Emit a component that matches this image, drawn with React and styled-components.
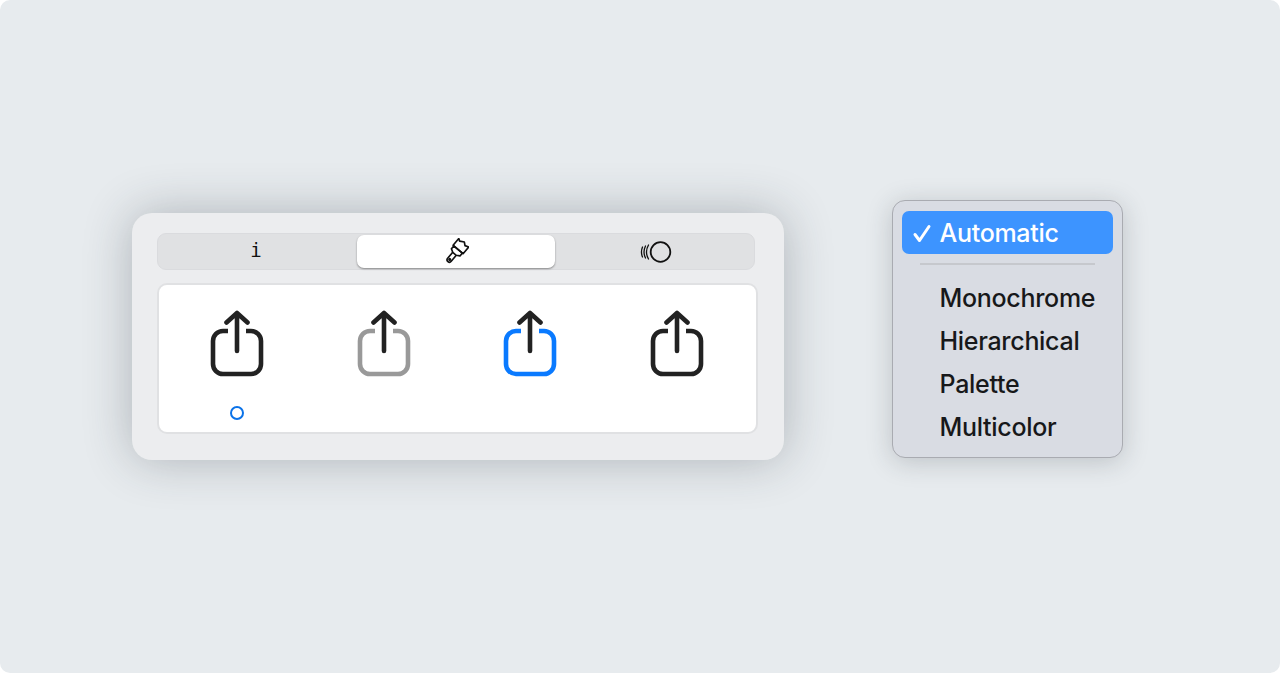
import React from "react"
import styled, { createGlobalStyle } from "styled-components"

const Global = createGlobalStyle`
    html, body {
        margin: 0;
        padding: 0;
        background: #fff;
    }
    * {
        box-sizing: border-box;
    }
`

const Page = styled.div`
    width: 1280px;
    height: 673px;
    display: flex;
    align-items: flex-start;
    padding: 200px 0 0 132px;
    gap: 108px;
    background: #e7ebee;
    border-radius: 10px;
    overflow: hidden;
    font-family: Inter, "Liberation Sans", sans-serif;
`

const Panel = styled.div`
    width: 652px;
    height: 247px;
    margin-top: 13px;
    padding: 20px 27px 0 25px;
    background: #ecedef;
    border-radius: 20px;
    box-shadow: 0 0 48px rgba(40, 50, 60, 0.3);
`

const Segments = styled.div`
    width: 598px;
    height: 37px;
    padding: 1px;
    display: grid;
    grid-template-columns: repeat(3, 1fr);
    background: #e0e1e3;
    border: 1px solid #dadbde;
    border-radius: 9px;
`

const Segment = styled.div`
    display: flex;
    align-items: center;
    justify-content: center;
    border-radius: 7px;
    background: ${p => (p.$active ? "#fff" : "transparent")};
    box-shadow: ${p => (p.$active ? "0 1px 2px rgba(0, 0, 0, 0.4)" : "none")};
    color: #111;
`

const InfoGlyph = styled.span`
    font-family: "DejaVu Sans Mono", "Liberation Mono", monospace;
    font-size: 19px;
    line-height: 1;
    margin: -2px 4px 0 0;
`

const Card = styled.div`
    width: 601px;
    height: 151px;
    margin-top: 13px;
    padding: 0 6px 0 5px;
    display: grid;
    grid-template-columns: repeat(4, 1fr);
    background: #fff;
    border: 2px solid #e0e1e3;
    border-radius: 10px;
`

const Cell = styled.div`
    display: flex;
    flex-direction: column;
    align-items: center;
    padding-top: 25px;
`

const Dot = styled.span`
    width: 14px;
    height: 14px;
    margin-top: 28px;
    border: 2px solid #0a72e8;
    border-radius: 50%;
`

const Menu = styled.div`
    width: 231px;
    height: 258px;
    padding: 10px 9.5px 10px 8.5px;
    background: #d9dce3;
    border: 1.5px solid #a9abb1;
    border-radius: 13px;
    box-shadow: 0 4px 26px rgba(40, 50, 60, 0.22);
`

const MenuItem = styled.div`
    height: 43px;
    padding-left: 38px;
    position: relative;
    display: flex;
    align-items: center;
    font-size: 25px;
    font-weight: 450;
    letter-spacing: -0.3px;
    color: ${p => (p.$selected ? "#fff" : "#17181a")};
    background: ${p => (p.$selected ? "#3d94ff" : "transparent")};
    border-radius: 7px;
`

const Check = styled.svg`
    position: absolute;
    left: 10px;
    top: 13px;
`

const Separator = styled.div`
    height: 2px;
    margin: 9px 18px 11px 18px;
    background: #c6c8cd;
`

function ShareIcon({ color }) {
    return (
        <svg width="54" height="68" viewBox="0 0 54 68" fill="none" strokeWidth="4.6" strokeLinecap="round" strokeLinejoin="round">
            <path
                d="M18 21H13a10 10 0 0 0-10 10V54a10 10 0 0 0 10 10H41a10 10 0 0 0 10-10V31a10 10 0 0 0-10-10H36"
                stroke={color}
                strokeLinecap="butt"
            />
            <path d="M27 41V4M16.5 12.5L27 3L37.5 12.5" stroke="#222" />
        </svg>
    )
}

function BrushIcon() {
    return (
        <svg width="26" height="28" viewBox="0 0 28 30" fill="none" stroke="#111" strokeWidth="1.8" strokeLinejoin="round">
            <g transform="rotate(40 14 15)">
                <path d="M7 2L9.5 3.5L14 1L17 3.5L21 2V11.5H7Z" />
                <path d="M8 11.5H20V15.5L16.5 17.5H11.5L8 15.5Z" />
                <path d="M11.5 17.5V26A2.5 2.5 0 0 0 16.5 26V17.5" />
                <circle cx="14" cy="25.5" r="0.8" />
            </g>
        </svg>
    )
}

function HapticIcon() {
    return (
        <svg width="38" height="24" viewBox="0 0 38 24" fill="none" stroke="#111" strokeLinecap="round">
            <circle cx="25.5" cy="12" r="9.8" strokeWidth="1.8" />
            <path d="M13.5 5A14 14 0 0 0 13.5 19" strokeWidth="1.3" />
            <path d="M10.5 6A13.5 13.5 0 0 0 10.5 18" strokeWidth="1.3" />
            <path d="M7.5 7A13 13 0 0 0 7.5 17" strokeWidth="1.3" />
        </svg>
    )
}

const iconColors = ["#222", "#999", "#0a7aff", "#222"]
const menuItems = ["Monochrome", "Hierarchical", "Palette", "Multicolor"]

export default function App() {
    return (
        <>
            <Global />
            <Page>
                <Panel>
                    <Segments>
                        <Segment>
                            <InfoGlyph>i</InfoGlyph>
                        </Segment>
                        <Segment $active>
                            <BrushIcon />
                        </Segment>
                        <Segment>
                            <HapticIcon />
                        </Segment>
                    </Segments>
                    <Card>
                        {iconColors.map((color, i) => (
                            <Cell key={i}>
                                <ShareIcon color={color} />
                                {i === 0 && <Dot />}
                            </Cell>
                        ))}
                    </Card>
                </Panel>
                <Menu>
                    <MenuItem $selected>
                        <Check width="20" height="19" viewBox="0 0 20 19" fill="none" stroke="#fff" strokeWidth="3" strokeLinecap="round" strokeLinejoin="round">
                            <path d="M3 10.5L7.5 16.5L17 2.5" />
                        </Check>
                        Automatic
                    </MenuItem>
                    <Separator />
                    {menuItems.map(item => (
                        <MenuItem key={item}>{item}</MenuItem>
                    ))}
                </Menu>
            </Page>
        </>
    )
}
